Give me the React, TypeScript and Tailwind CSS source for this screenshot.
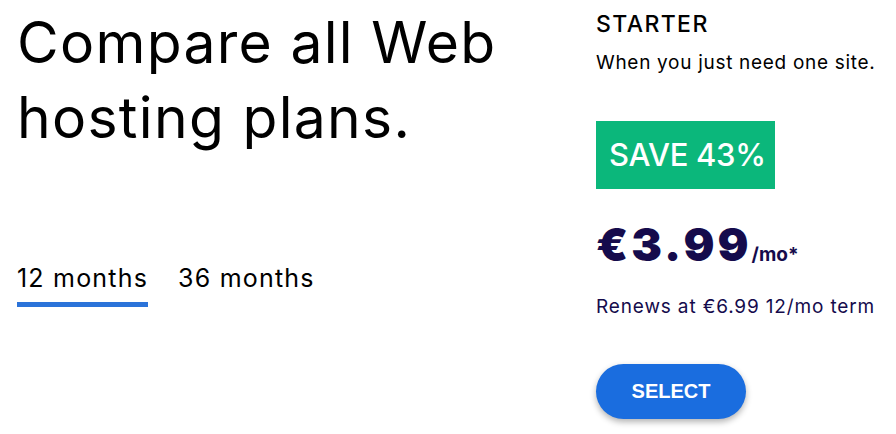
import React, { useState } from 'react';

// 기간 탭
const terms = ['12 months', '36 months'];

const App = () => {
    const [term, setTerm] = useState(0);

    return (
        <div className="flex h-[434px] w-[896px] bg-white text-black overflow-hidden" style={{ fontFamily: 'Inter, "Noto Sans", sans-serif' }}>
            {/* 왼쪽: 제목 + 탭 */}
            <section className="w-[596px] pl-[17px] pt-[5px]">
                <h1 className="text-[57px] leading-[75px] font-normal tracking-[1.3px]">
                    Compare all Web<br />hosting plans.
                </h1>

                <div className="mt-[108px] flex gap-[30px]">
                    {terms.map((t, i) => (
                        <button
                            key={t}
                            type="button"
                            onClick={() => setTerm(i)}
                            className="flex flex-col items-stretch"
                        >
                            <span className="text-[25px] leading-[30px] tracking-[1.2px]">{t}</span>
                            <span className={i === term ? 'mt-[9px] h-[5px] bg-[#2b73d9]' : 'mt-[9px] h-[5px]'} />
                        </button>
                    ))}
                </div>
            </section>

            {/* 오른쪽: 요금 카드 */}
            <section className="flex flex-col items-start pt-[10px]">
                <h2 className="text-[23px] leading-[28px] font-medium tracking-[1.4px]">STARTER</h2>
                <p className="mt-[13px] text-[19px] leading-[24px] tracking-[0.7px]">When you just need one site.</p>

                <div className="mt-[46px] flex h-[68px] w-[179px] items-center bg-[#0bb77b] pl-[13px] text-[31px] font-medium tracking-[-0.3px] text-white">
                    SAVE 43%
                </div>

                <div className="mt-[31px] flex items-baseline text-[#150b4c]">
                    <span className="text-[46px] leading-[48px] font-black tracking-[3px]">€3.99</span>
                    <span className="text-[19px] font-bold">/mo*</span>
                </div>

                <p className="mt-[25px] text-[19px] leading-[24px] tracking-[0.85px] text-[#150b4c]">Renews at €6.99 12/mo term</p>

                <button
                    type="button"
                    className="mt-[45px] h-[55px] w-[150px] rounded-full bg-[#1a6ddf] text-[20px] font-bold text-white shadow-[0_3px_6px_rgba(0,0,0,0.3)]"
                    style={{ fontFamily: '"Liberation Sans", Arial, sans-serif' }}
                >
                    SELECT
                </button>
            </section>
        </div>
    );
};

export default App;
